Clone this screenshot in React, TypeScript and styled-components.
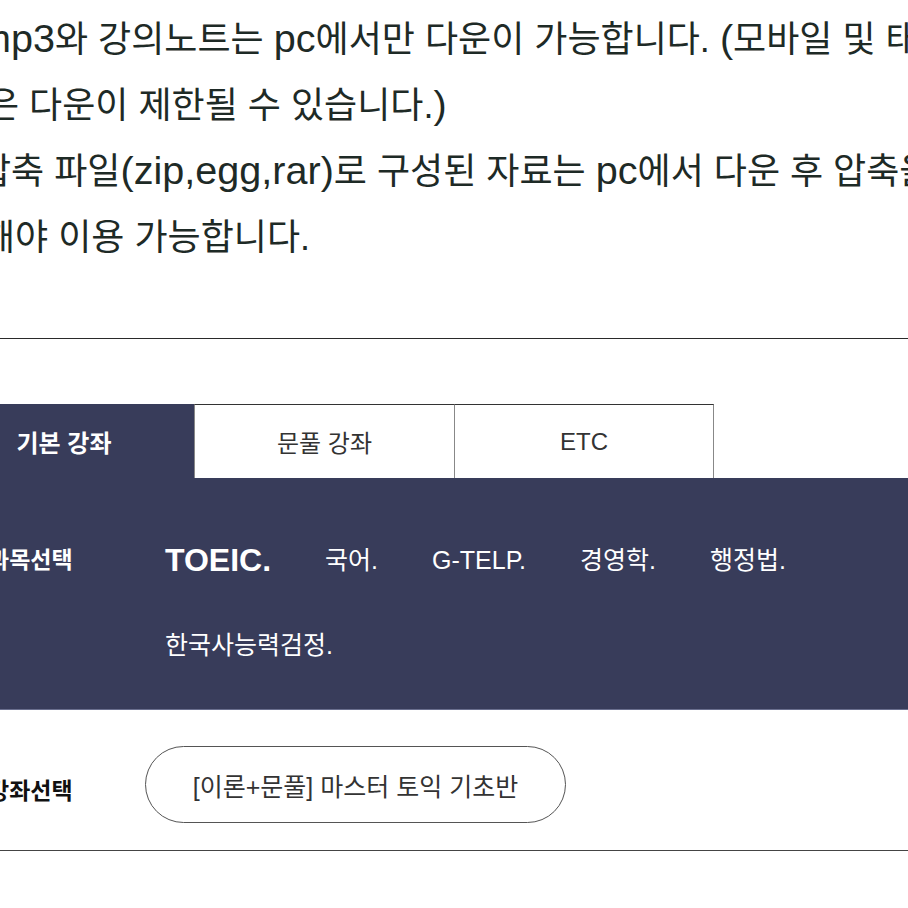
import styled, { createGlobalStyle } from "styled-components";

const GlobalStyle = createGlobalStyle`
  html, body {
    margin: 0;
    padding: 0;
    background: #fff;
    overflow: hidden;
  }
  body {
    font-family: "Liberation Sans", "Noto Sans CJK KR", sans-serif;
  }
`;

const Page = styled.div`
  width: 1040px;
  margin-left: -66px;
`;

const Notice = styled.div`
  padding: 7px 0 0 44px;
  color: #1e2a26;
  font-size: 36px;
  line-height: 66px;
  white-space: nowrap;
`;

const NoticeLine = styled.div<{ $indent?: number }>`
  margin-left: ${(p) => p.$indent ?? 0}px;
`;

// latin runs render a bit larger than the hangul in the original font
const Latin = styled.span`
  font-size: 1.1em;
  line-height: 0;
`;

const Divider = styled.hr`
  margin: 67px 0 0;
  border: none;
  border-top: 1px solid #2a2a2a;
`;

const TabBar = styled.div`
  display: flex;
  margin-top: 65px;
`;

const Tab = styled.div<{ $active?: boolean }>`
  box-sizing: border-box;
  width: 260px;
  height: 74px;
  display: flex;
  align-items: center;
  justify-content: center;
  font-size: 24px;
  background: ${(p) => (p.$active ? "#383c5a" : "#fff")};
  color: ${(p) => (p.$active ? "#fff" : "#333")};
  font-weight: ${(p) => (p.$active ? 700 : 400)};
  border-top: 1px solid ${(p) => (p.$active ? "#383c5a" : "#333")};
  border-left: ${(p) => (p.$active ? "none" : "1px solid #888")};

  &:last-child {
    border-right: 1px solid #888;
  }
`;

const SubjectPanel = styled.div`
  display: flex;
  align-items: flex-start;
  background: #383c5a;
  border-bottom: 1px solid #6a6f8e;
  padding: 62px 60px 44px 54px;
`;

const Label = styled.div<{ $width: number; $light?: boolean }>`
  flex: 0 0 ${(p) => p.$width}px;
  font-size: 23px;
  font-weight: 700;
  line-height: 40px;
  color: ${(p) => (p.$light ? "#fff" : "#111")};
`;

const SubjectList = styled.div`
  flex: 1;
  display: flex;
  flex-wrap: wrap;
  align-items: center;
  column-gap: 54px;
  row-gap: 45px;
`;

const Subject = styled.span<{ $active?: boolean }>`
  line-height: 40px;
  color: #fff;
  font-size: ${(p) => (p.$active ? "32px" : "25px")};
  font-weight: ${(p) => (p.$active ? 700 : 400)};
`;

const CourseRow = styled.div`
  display: flex;
  align-items: center;
  padding: 36px 0 27px 54px;
  border-bottom: 1px solid #444;

  & > ${Label} {
    margin-top: 12px;
  }
`;

const Pill = styled.div`
  box-sizing: border-box;
  width: 421px;
  height: 77px;
  display: flex;
  align-items: center;
  justify-content: center;
  border: 1px solid #555;
  border-radius: 39px;
  font-size: 25px;
  color: #333;
`;

const subjects = ["TOEIC.", "국어.", "G-TELP.", "경영학.", "행정법.", "한국사능력검정."];

export default function App() {
  return (
    <>
      <GlobalStyle />
      <Page>
        <Notice>
          <NoticeLine>
            <Latin>mp3</Latin>와 강의노트는 <Latin>pc</Latin>에서만 다운이 가능합니다. <Latin>(</Latin>모바일 및 태블릿 기기에서
          </NoticeLine>
          <NoticeLine $indent={8}>
            은 다운이 제한될 수 있습니다.<Latin>)</Latin>
          </NoticeLine>
          <NoticeLine>
            압축 파일<Latin>(zip,egg,rar)</Latin>로 구성된 자료는 <Latin>pc</Latin>에서 다운 후 압축을
          </NoticeLine>
          <NoticeLine $indent={4}>해야 이용 가능합니다.</NoticeLine>
        </Notice>
        <Divider />
        <TabBar>
          <Tab $active>기본 강좌</Tab>
          <Tab>문풀 강좌</Tab>
          <Tab>ETC</Tab>
        </TabBar>
        <SubjectPanel>
          <Label $width={177} $light>
            과목선택
          </Label>
          <SubjectList>
            {subjects.map((s, i) => (
              <Subject key={s} $active={i === 0}>
                {s}
              </Subject>
            ))}
          </SubjectList>
        </SubjectPanel>
        <CourseRow>
          <Label $width={157}>강좌선택</Label>
          <Pill>[이론+문풀] 마스터 토익 기초반</Pill>
        </CourseRow>
      </Page>
    </>
  );
}
